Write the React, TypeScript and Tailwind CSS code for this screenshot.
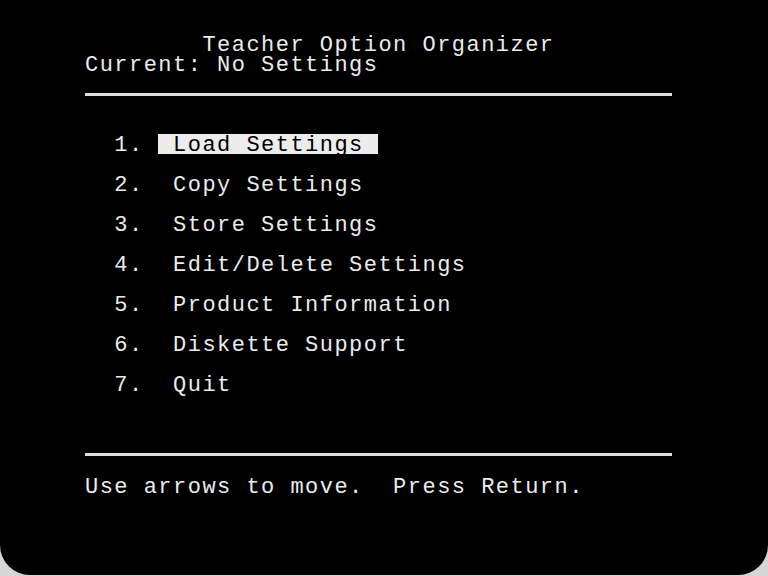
import React from "react";

const items = [
  "Load Settings",
  "Copy Settings",
  "Store Settings",
  "Edit/Delete Settings",
  "Product Information",
  "Diskette Support",
  "Quit",
];

// one text row of the 40-column screen
function Row({ children }: { children: React.ReactNode }) {
  return <div className="h-[20px] leading-[24px] whitespace-pre">{children}</div>;
}

export default function App() {
  const selected = 0;

  return (
    <div className="w-[768px] h-[576px] bg-[#d6d6d6] overflow-hidden">
      <div
        className="w-[768px] h-[575px] bg-black rounded-b-[30px] pt-[34px] pl-[85px] text-[#ebebeb] text-[22px] tracking-[1.47px]"
        style={{ fontFamily: '"Liberation Mono", "DejaVu Sans Mono", monospace' }}
      >
        <div className="w-[587px]">
          <Row>{"        Teacher Option Organizer"}</Row>
          <Row>{"Current: No Settings"}</Row>
          <div className="mt-[19px] h-[3px] bg-[#dcdcdc]" />

          <div className="mt-[38px] flex flex-col gap-[20px]">
            {items.map((label, i) => (
              <Row key={label}>
                {`  ${i + 1}. `}
                {i === selected ? (
                  <span className="inline-block h-[20px] leading-[24px] align-top bg-[#ececec] text-black">{` ${label} `}</span>
                ) : (
                  ` ${label}`
                )}
              </Row>
            ))}
          </div>

          <div className="mt-[59px] h-[3px] bg-[#dcdcdc]" />
          <div className="mt-[20px]">
            <Row>{"Use arrows to move.  Press Return."}</Row>
          </div>
        </div>
      </div>
    </div>
  );
}
